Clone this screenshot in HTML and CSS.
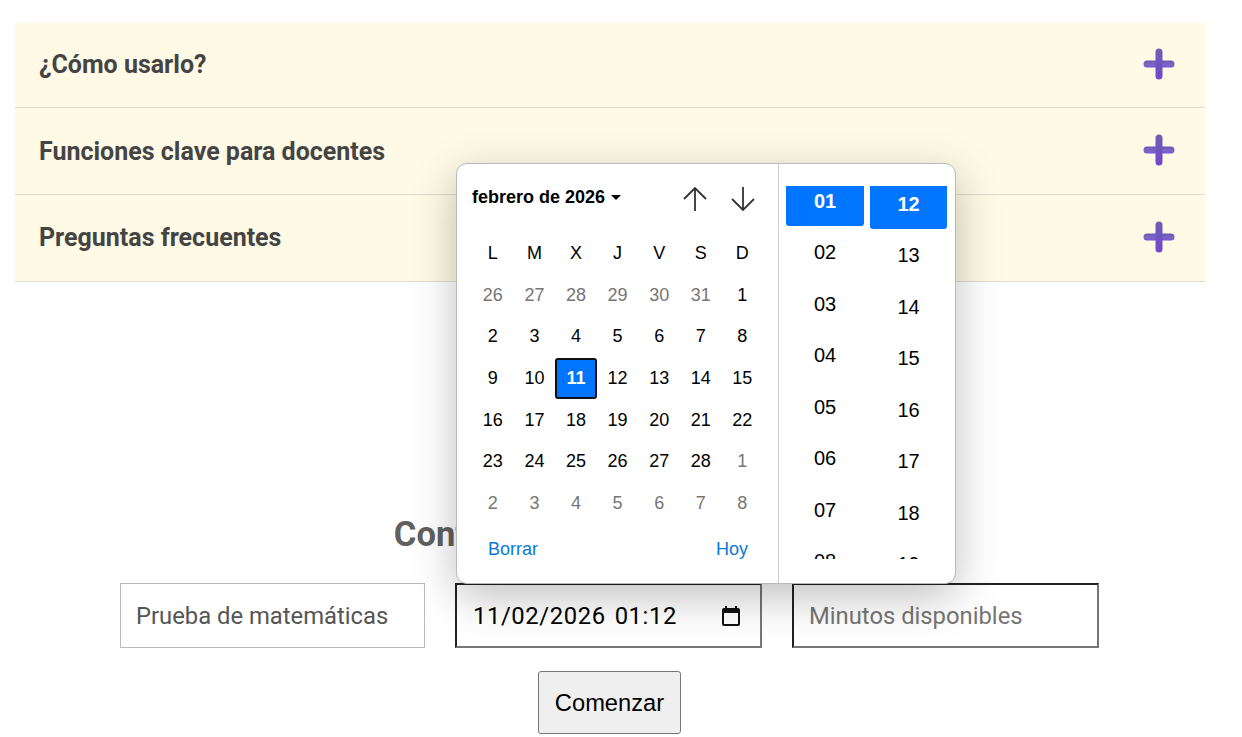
FILE: index.html
```html
<!DOCTYPE html>
<html lang="es">
<head>
<meta charset="utf-8">
<title>Prueba</title>
<link rel="stylesheet" href="styles.css">
</head>
<body>
<main class="page">
  <section class="accordion">
    <div class="acc-row acc-row-1"><h3>¿Cómo usarlo?</h3>
      <svg class="plus" viewBox="0 0 32 32"><use href="#plus-shape"/></svg></div>
    <div class="acc-row acc-row-2"><h3>Funciones clave para docentes</h3>
      <svg class="plus" viewBox="0 0 32 32"><use href="#plus-shape"/></svg></div>
    <div class="acc-row acc-row-3"><h3>Preguntas frecuentes</h3>
      <svg class="plus" viewBox="0 0 32 32"><use href="#plus-shape"/></svg></div>
  </section>

  <svg class="defs" width="0" height="0" aria-hidden="true">
    <defs>
      <linearGradient id="plus-v" x1="0" y1="0" x2="0" y2="1">
        <stop offset="0" stop-color="#6f5fb0"/>
        <stop offset="1" stop-color="#7048cf"/>
      </linearGradient>
      <linearGradient id="plus-h" x1="0" y1="0" x2="0" y2="1">
        <stop offset="0" stop-color="#6a55b4"/>
        <stop offset="0.55" stop-color="#7a68bf"/>
        <stop offset="1" stop-color="#7c4fe0"/>
      </linearGradient>
      <g id="plus-shape">
        <rect x="0.5" y="12.5" width="31" height="7" rx="3.5" fill="url(#plus-h)"/>
        <rect x="12.5" y="0.5" width="7" height="31" rx="3.5" fill="url(#plus-v)"/>
      </g>
    </defs>
  </svg>

  <section class="form-area">
    <h2 class="form-title">Configurar cuenta regresiva</h2>
    <div class="fields">
      <div class="field field-filled">Prueba de matemáticas</div>
      <div class="field field-inset field-date">
        <span class="date-text">11/02/2026</span><span class="time-text">01:12</span>
        <svg class="cal-icon" viewBox="0 0 24 24"><path d="M19 4h-1V2h-2v2H8V2H6v2H5a2 2 0 0 0-2 2v14a2 2 0 0 0 2 2h14a2 2 0 0 0 2-2V6a2 2 0 0 0-2-2zm0 16H5V9h14v11z"/></svg>
      </div>
      <div class="field field-inset field-placeholder">Minutos disponibles</div>
    </div>
    <button class="start" type="button">Comenzar</button>
  </section>

  <div class="picker">
    <div class="cal">
      <div class="cal-head">
        <div class="month">febrero de 2026<span class="caret"></span></div>
        <div class="arrows">
          <svg class="arrow" viewBox="0 0 24 24"><path d="M12 24V1M1 12L12 1l11 11"/></svg>
          <svg class="arrow" viewBox="0 0 24 24"><path d="M12 0v23M1 12l11 11 11-11"/></svg>
        </div>
      </div>
      <div class="grid">
        <span>L</span><span>M</span><span>X</span><span>J</span><span>V</span><span>S</span><span>D</span>
        <span class="off">26</span><span class="off">27</span><span class="off">28</span><span class="off">29</span><span class="off">30</span><span class="off">31</span><span>1</span>
        <span>2</span><span>3</span><span>4</span><span>5</span><span>6</span><span>7</span><span>8</span>
        <span>9</span><span>10</span><span class="sel">11</span><span>12</span><span>13</span><span>14</span><span>15</span>
        <span>16</span><span>17</span><span>18</span><span>19</span><span>20</span><span>21</span><span>22</span>
        <span>23</span><span>24</span><span>25</span><span>26</span><span>27</span><span>28</span><span class="off">1</span>
        <span class="off">2</span><span class="off">3</span><span class="off">4</span><span class="off">5</span><span class="off">6</span><span class="off">7</span><span class="off">8</span>
      </div>
      <div class="cal-foot"><span>Borrar</span><span>Hoy</span></div>
    </div>
    <div class="times">
      <div class="col col-h">
        <div class="col-inner col-inner-h">
          <span class="on">01</span><span>02</span><span>03</span><span>04</span><span>05</span><span>06</span><span>07</span><span>08</span>
        </div>
      </div>
      <div class="col col-m">
        <div class="col-inner col-inner-m">
          <span class="on">12</span><span>13</span><span>14</span><span>15</span><span>16</span><span>17</span><span>18</span><span>19</span>
        </div>
      </div>
    </div>
  </div>
</main>
</body>
</html>
```

FILE: styles.css
```css
* { box-sizing: border-box; }
html, body { margin: 0; padding: 0; background: #fff; }
body { height: 737px; overflow: hidden; font-family: Roboto, "Liberation Sans", sans-serif; }
.page { position: relative; padding: 23px 37px 0 15px; height: 737px; }
.defs { display: block; height: 0; }

.accordion { background: #fffae6; }
.acc-row {
  display: flex; align-items: center; justify-content: space-between;
  padding: 0 30px 0 24px;
  border-bottom: 1px solid #dddbd0;
}
.acc-row-1 { height: 85px; }
.acc-row-2 { height: 87px; }
.acc-row-3 { height: 87px; }
.acc-row h3 { margin: 0; padding-bottom: 1px; font-size: 25px; font-weight: 700; color: #444; }
.acc-row-2 h3 { padding-bottom: 0; }
.plus { width: 32px; height: 32px; display: block; margin-bottom: 3px; }

.form-area { display: flex; flex-direction: column; align-items: center; padding-top: 232px; margin-right: 1px; }
.form-title { margin: 0; font-size: 34.5px; line-height: 40px; font-weight: 700; color: #606060; white-space: nowrap; }
.fields { display: flex; gap: 30px; margin-top: 29px; }
.field { height: 65px; display: flex; align-items: center; font-size: 23.8px; width: 305px; padding-left: 15px; }
.field-filled { border: 1px solid #bbb; color: #555; }
.field-inset { width: 307px; border: 2px solid; border-color: #222 #767676 #767676 #222; }
.field-date { color: #000; padding-left: 16px; padding-right: 17px; letter-spacing: 0.6px; }
.time-text { margin-left: 9px; }
.cal-icon { width: 24px; height: 24px; margin-left: auto; fill: #111; flex: none; }
.field-placeholder { color: #757575; }
.start {
  margin-top: 23px; width: 143px; height: 63px; padding: 1px 0 0;
  background: #efefef; border: 1px solid #767676; border-radius: 3px;
  font-family: "Liberation Sans", sans-serif; font-size: 23.7px; color: #000;
}

.picker {
  position: absolute; left: 456px; top: 163px; width: 500px; height: 421px;
  display: flex; background: #fff;
  border: 1px solid #bbb; border-radius: 11px;
  box-shadow: 0 13px 44px rgba(0, 0, 0, .25);
  font-family: "Liberation Sans", sans-serif; color: #000;
}
.cal { width: 322px; padding: 0 0 0 15px; border-right: 1px solid #ccc; display: flex; flex-direction: column; }
.cal-head { display: flex; justify-content: space-between; align-items: center; height: 67px; margin-bottom: 1.500px; padding-right: 22px; }
.month { font-size: 18px; font-weight: 700; display: flex; align-items: center; }
.caret { width: 0; height: 0; margin-left: 6px; border: 5px solid transparent; border-top-color: #000; border-bottom: 0; }
.arrows { display: flex; gap: 24px; margin-top: 3px; margin-right: 1px; }
.arrow { width: 24px; height: 24px; display: block; fill: none; stroke: #333; stroke-width: 1.8; }
.grid { display: grid; grid-template-columns: repeat(7, 41.6px); grid-auto-rows: 41.7px; }
.grid span { display: flex; align-items: center; justify-content: center; font-size: 18px; }
.grid .off { color: #767676; }
.grid .sel { background: #0075ff; color: #fff; font-weight: 700; border: 2px solid #101010; border-radius: 3px; }
.cal-foot { display: flex; justify-content: space-between; padding: 15px 30px 0 16px; font-size: 18px; color: #0a7ad6; }

.times { display: flex; gap: 6px; padding: 22px 0 24px 7px; }
.col { width: 78px; overflow: hidden; }
.col-m { width: 77px; }
.col-inner { display: flex; flex-direction: column; gap: 2.500px; }
.col-inner-h { margin-top: -9px; }
.col-inner-m { margin-top: -6px; }
.col-inner span { height: 49px; flex: none; padding-bottom: 1px; display: flex; align-items: center; justify-content: center; font-size: 20px; border-radius: 3px; }
.col-inner .on { background: #0075ff; color: #fff; font-weight: 700; }
```
